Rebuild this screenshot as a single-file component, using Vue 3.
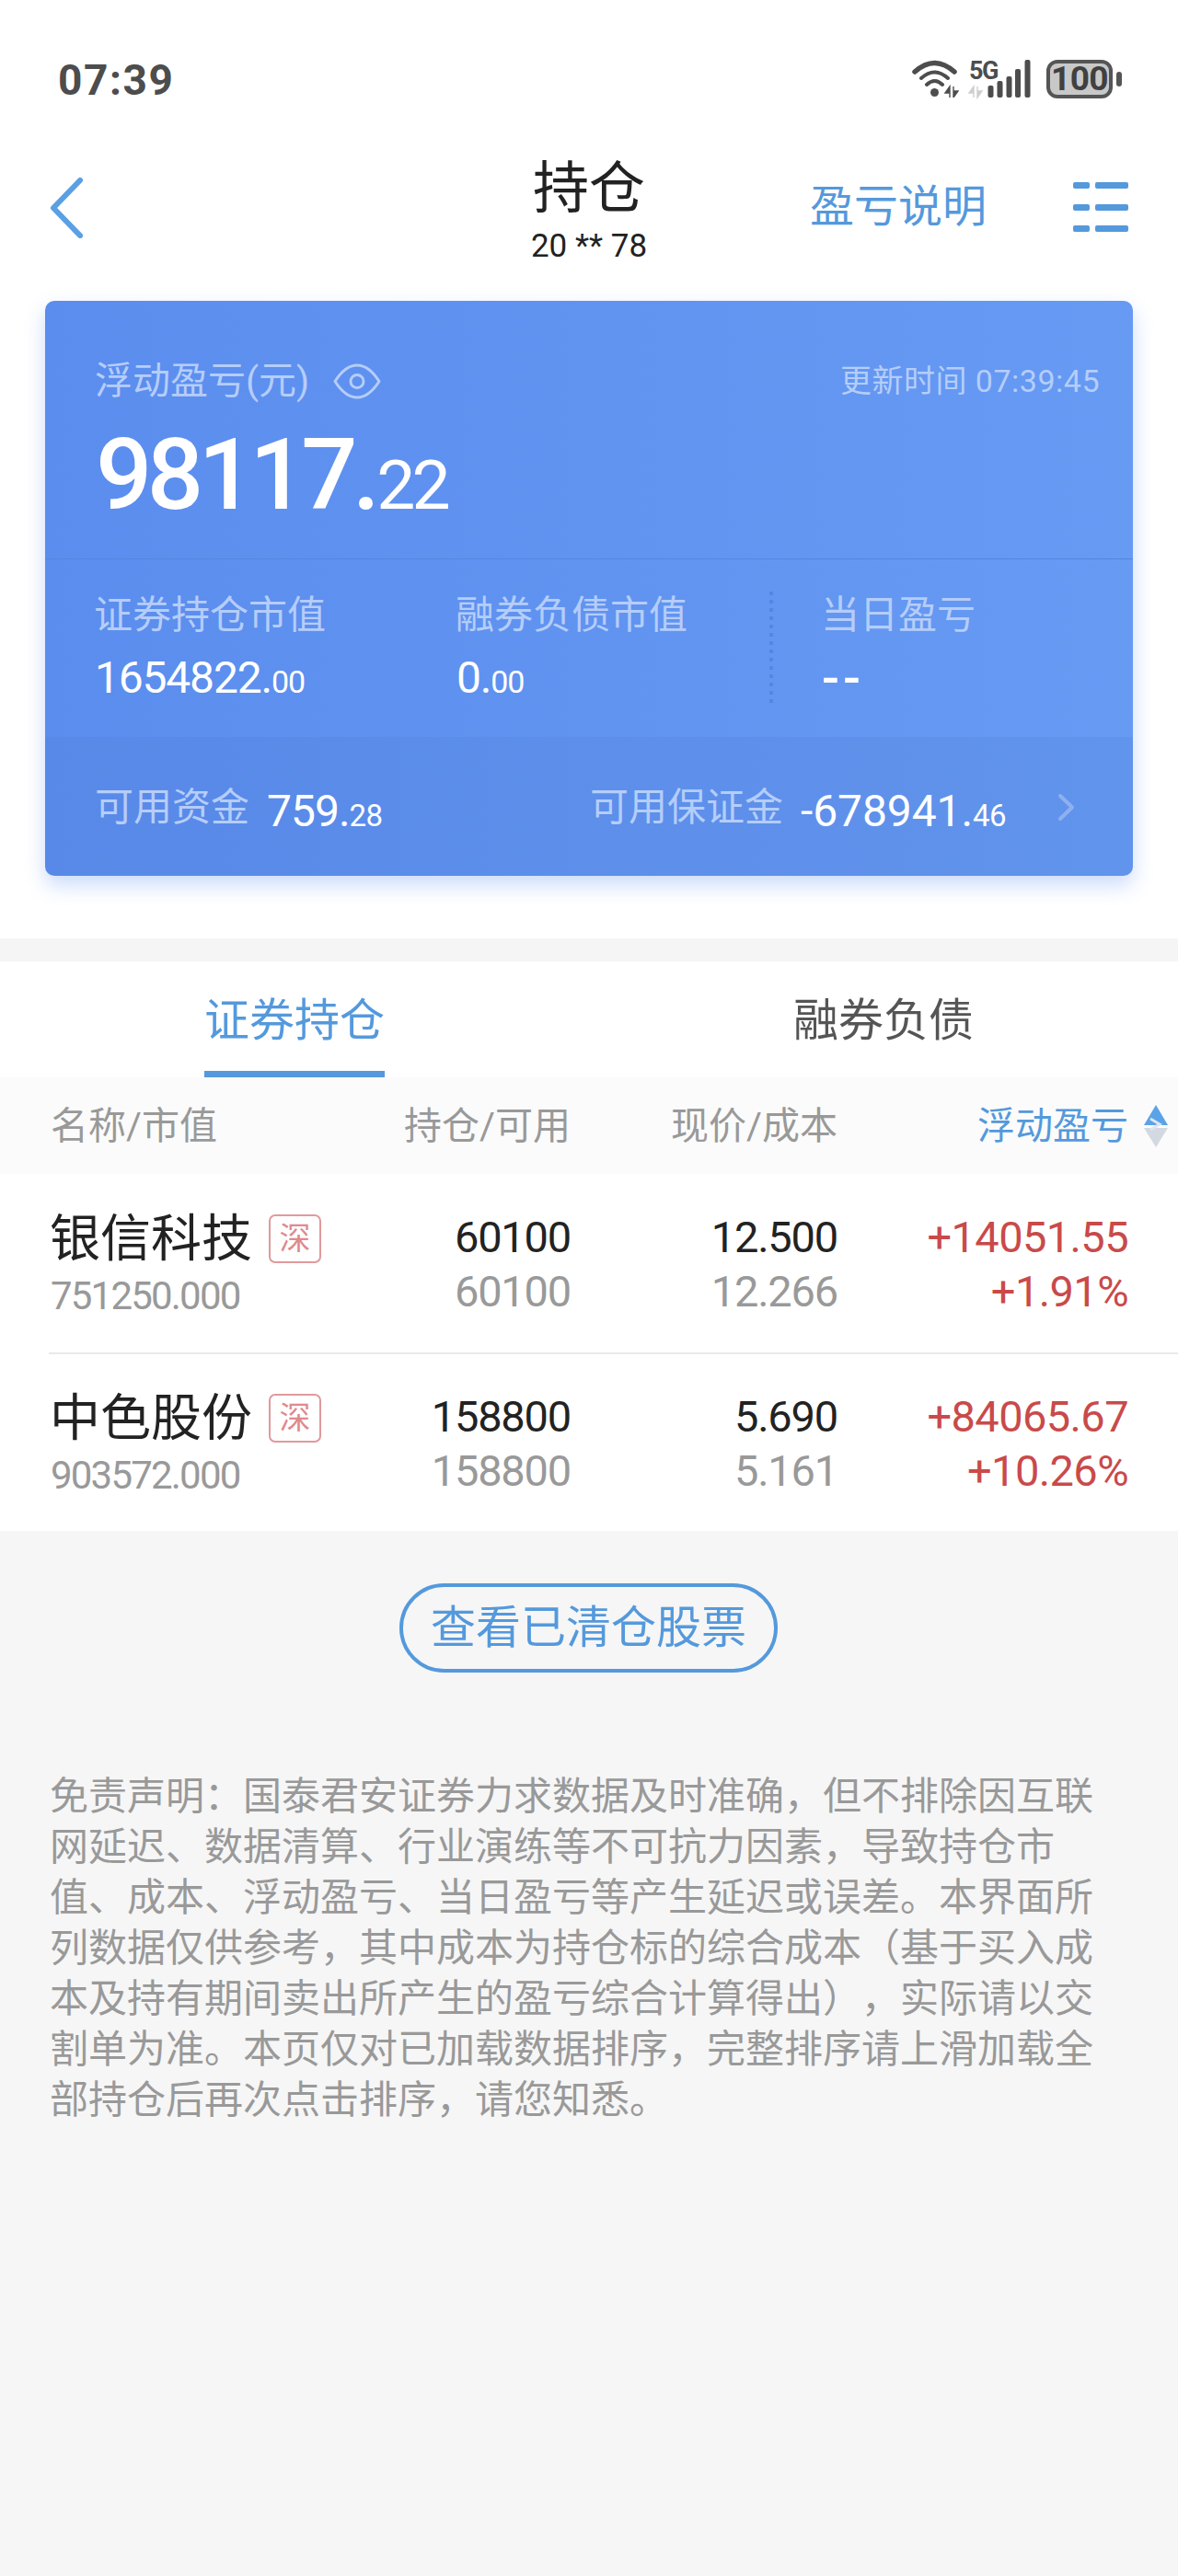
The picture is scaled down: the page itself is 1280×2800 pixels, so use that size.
<script setup>
const rows = [
  { name: '银信科技', mv: '751250.000', qty: '60100', avail: '60100', price: '12.500', cost: '12.266', pl: '+14051.55', pct: '+1.91%' },
  { name: '中色股份', mv: '903572.000', qty: '158800', avail: '158800', price: '5.690', cost: '5.161', pl: '+84065.67', pct: '+10.26%' }
]
const bars = [
  { x: 20.5, y: 28 }, { x: 30.5, y: 23 }, { x: 40.5, y: 18 }, { x: 50, y: 10 }, { x: 60.5, y: 0 }
]
const note = '免责声明\uFF1A国泰君安证券力求数据及时准确\uFF0C但不排除因互联网延迟、数据清算、行业演练等不可抗力因素\uFF0C导致持仓市值、成本、浮动盈亏、当日盈亏等产生延迟或误差。本界面所列数据仅供参考\uFF0C其中成本为持仓标的综合成本\uFF08基于买入成本及持有期间卖出所产生的盈亏综合计算得出\uFF09\uFF0C实际请以交割单为准。本页仅对已加载数据排序\uFF0C完整排序请上滑加载全部持仓后再次点击排序\uFF0C请您知悉。'
</script>

<template>
  <div class="page">
    <div class="status">
      <span class="time">07:39</span>
      <div class="status-icons">
        <svg class="wifi" width="51" height="41" viewBox="0 0 51 41" fill="none" stroke="#4d4d4d" stroke-linecap="round">
          <path d="M3 13 Q24.5 -6 46 13" stroke-width="5.5" />
          <path d="M10 20 Q24.5 7 39 20" stroke-width="4" />
          <path d="M16 27 Q24.5 19 33 27" stroke-width="4" />
          <circle cx="24.5" cy="35.5" r="4.5" fill="#4d4d4d" stroke="none" />
          <path d="M41 41 V29 L36 36 H41 M45 29 V41 L50 34 H45" fill="#4d4d4d" stroke="#4d4d4d" stroke-width="1.4" stroke-linecap="butt" />
        </svg>
        <svg class="signal" width="67" height="41" viewBox="0 0 67 41">
          <text class="fiveg" x="0" y="21">5G</text>
          <path d="M5 41 V29 L0 36 H5 M9 29 V41 L14 34 H9" fill="#cfcfcf" stroke="#cfcfcf" stroke-width="1.4" />
          <rect v-for="b in bars" :key="b.x" :x="b.x" :y="b.y" width="6" :height="41 - b.y" rx="2" fill="#4d4d4d" />
        </svg>
        <div class="battery"><span class="battery-text">100</span></div>
        <span class="battery-cap"></span>
      </div>
    </div>

    <div class="nav">
      <svg class="back" width="36" height="66" viewBox="0 0 36 66" fill="none" stroke="#5aa0e4" stroke-width="6" stroke-linecap="round" stroke-linejoin="round">
        <path d="M33 3 L4 33 L33 63" />
      </svg>
      <div class="title-block">
        <div class="title">持仓</div>
        <div class="account">20 ** 78</div>
      </div>
      <div class="nav-right">
        <span class="explain">盈亏说明</span>
        <div class="menu">
          <div v-for="n in 3" :key="n" class="menu-row"><i></i><b></b></div>
        </div>
      </div>
    </div>

    <div class="card-wrap">
      <div class="card">
        <div class="card-top">
          <div class="top-head">
            <div class="float-label">
              <span>浮动盈亏(元)</span>
              <svg width="52" height="39" viewBox="0 0 52 39" fill="none" stroke="#b5cdf9" stroke-width="3">
                <path d="M2 19.5 C10 7 18 2 26 2 S42 7 50 19.5 C42 32 34 37 26 37 S10 32 2 19.5 Z" stroke-linejoin="round" />
                <circle cx="26" cy="19.5" r="7" />
              </svg>
            </div>
            <span class="update">更新时间 07:39:45</span>
          </div>
          <div class="big-num">98117.<span class="big-dec">22</span></div>
        </div>
        <div class="card-mid">
          <div class="col col-a">
            <div class="card-label">证券持仓市值</div>
            <div class="mid-num">1654822.<span class="mid-dec">00</span></div>
          </div>
          <div class="col col-b">
            <div class="card-label">融券负债市值</div>
            <div class="mid-num">0.<span class="mid-dec">00</span></div>
          </div>
          <div class="dash"></div>
          <div class="col col-c">
            <div class="card-label">当日盈亏</div>
            <div class="mid-num empty-num">--</div>
          </div>
        </div>
        <div class="card-foot">
          <span class="card-label foot-a">可用资金</span>
          <span class="mid-num foot-num-a">759.<span class="foot-dec">28</span></span>
          <span class="card-label foot-b">可用保证金</span>
          <span class="mid-num foot-num-b">-678941.<span class="foot-dec">46</span></span>
          <svg class="foot-chev" width="19" height="31" viewBox="0 0 19 31" fill="none" stroke="#8fb0f0" stroke-width="4" stroke-linecap="round" stroke-linejoin="round">
            <path d="M3 3 L16 15.5 L3 28" />
          </svg>
        </div>
      </div>
    </div>

    <div class="strip"></div>

    <div class="tabs">
      <div class="tab"><span class="tab-on">证券持仓</span></div>
      <div class="tab"><span class="tab-off">融券负债</span></div>
    </div>

    <div class="thead grid">
      <span>名称/市值</span>
      <span class="r">持仓/可用</span>
      <span class="r">现价/成本</span>
      <span class="r sort-cell">
        <em>浮动盈亏</em>
        <svg width="26" height="46" viewBox="0 0 26 46">
          <path d="M13 0 L26 22 H0 Z" fill="#5aa3e8" />
          <path d="M0 25 H26 L13 46 Z" fill="#d3d9e2" />
          <path d="M7 15 L17 21 L7 27" fill="none" stroke="#dfe5ee" stroke-width="3" />
        </svg>
      </span>
    </div>

    <div class="list">
      <div v-for="(row, i) in rows" :key="row.name" class="row-wrap" :class="{ 'has-line': i > 0 }">
        <div class="row grid">
          <div class="name-cell">
            <div class="name-line">
              <span class="name">{{ row.name }}</span>
              <span class="badge">深</span>
            </div>
            <div class="mv">{{ row.mv }}</div>
          </div>
          <div class="r cell"><div class="n1">{{ row.qty }}</div><div class="n2">{{ row.avail }}</div></div>
          <div class="r cell"><div class="n1">{{ row.price }}</div><div class="n2">{{ row.cost }}</div></div>
          <div class="r cell red"><div class="n1">{{ row.pl }}</div><div class="n2">{{ row.pct }}</div></div>
        </div>
      </div>
    </div>

    <div class="bottom">
      <div class="btn">查看已清仓股票</div>
      <p class="note">{{ note }}</p>
    </div>
  </div>
</template>

<style>
body { margin: 0; background: #f6f6f6; }
</style>

<style scoped>
.page {
  width: 1280px;
  height: 2800px;
  background: #f6f6f6;
  font-family: Roboto, "Noto Sans CJK SC", sans-serif;
  text-spacing-trim: space-all;
  overflow: hidden;
}
.status {
  height: 150px;
  box-sizing: border-box;
  padding: 65px 61px 0 63px;
  background: #fff;
  display: flex;
  justify-content: space-between;
  align-items: flex-start;
}
.time {
  font-size: 46px;
  line-height: 44px;
  font-weight: 700;
  color: #4d4d4d;
  letter-spacing: 1.6px;
}
.status-icons { display: flex; align-items: flex-start; }
.wifi { display: block; margin-right: 11px; }
.signal { display: block; margin-right: 17px; overflow: visible; }
.fiveg { font: 700 27px Roboto, sans-serif; fill: #4d4d4d; letter-spacing: -1.5px; }
.battery {
  width: 72px;
  height: 42px;
  box-sizing: border-box;
  border: 4px solid #555;
  border-radius: 12px;
  background: #c8c8c8;
  display: flex;
  align-items: center;
  justify-content: center;
}
.battery-text { font-size: 37px; line-height: 34px; font-weight: 700; color: #404040; letter-spacing: -0.5px; }
.battery-cap { width: 6px; height: 16px; margin: 13px 0 0 4px; border-radius: 3px; background: #555; }

.nav {
  height: 177px;
  box-sizing: border-box;
  background: #fff;
  padding: 0 54px;
  display: grid;
  grid-template-columns: 1fr auto 1fr;
  align-items: start;
}
.back { display: block; margin-top: 43px; }
.title-block { text-align: center; }
.title { font-size: 61px; line-height: 70px; margin-top: 20px; color: #222; font-weight: 400; }
.account { font-size: 35px; line-height: 40px; margin-top: 8px; color: #222; }
.nav-right {
  display: flex;
  justify-content: flex-end;
  align-items: flex-start;
}
.explain { font-size: 48px; line-height: 60px; margin-top: 45px; color: #5499dc; margin-right: 94px; white-space: nowrap; }
.menu { margin-top: 48px; display: flex; flex-direction: column; gap: 16.5px; }
.menu-row { display: flex; gap: 6px; height: 7px; }
.menu-row i { width: 18px; background: #5499dc; border-radius: 2px; }
.menu-row b { width: 36px; background: #5499dc; border-radius: 2px; }

.card-wrap { background: #fff; height: 693px; padding: 0 49px; }
.card {
  width: 1182px;
  height: 625px;
  border-radius: 10px;
  color: #fff;
  background: linear-gradient(90deg, #5b8dee, #669af3);
  box-shadow: 0 10px 22px rgba(94, 143, 238, 0.32);
  overflow: hidden;
  display: flex;
  flex-direction: column;
}
.card-top {
  height: 281px;
  box-sizing: border-box;
  padding: 62px 36px 0 54px;
  border-bottom: 1px solid #5585e0;
}
.top-head { display: flex; justify-content: space-between; align-items: center; height: 50px; }
.float-label { display: flex; align-items: center; gap: 26px; font-size: 41px; line-height: 50px; color: #b5cdf9; }
.float-label svg { display: block; }
.update { font-size: 34px; line-height: 40px; color: #b5cdf9; letter-spacing: 0.5px; }
.big-num { font-size: 108px; line-height: 110px; margin: 22px 0 0 1px; font-weight: 500; letter-spacing: -5.6px; }
.big-dec { font-size: 75px; font-weight: 400; letter-spacing: -4px; margin-left: 2px; }

.card-mid { height: 193px; padding-left: 54px; display: flex; }
.col { padding-top: 36px; }
.col .card-label { margin-left: -1px; }
.col-a { width: 393px; }
.col-b { width: 340px; }
.col-c { margin-left: 53px; }
.dash {
  width: 4px;
  height: 122px;
  margin-top: 35px;
  background: repeating-linear-gradient(180deg, #5585e3 0 4px, transparent 4px 9px);
}
.card-label { font-size: 42px; line-height: 50px; color: #b5cdf9; white-space: nowrap; }
.mid-num { font-size: 48px; line-height: 56px; margin-top: 15px; letter-spacing: -1.2px; white-space: nowrap; font-weight: 400; }
.mid-dec { font-size: 34px; font-weight: 400; letter-spacing: -1px; }
.empty-num { font-size: 56px; font-weight: 500; letter-spacing: 4px; font-variant-ligatures: none; }

.card-foot {
  flex: 1;
  padding: 0 63px 0 54px;
  display: flex;
  align-items: flex-start;
  background: rgba(70, 110, 200, 0.14);
  box-sizing: border-box;
}
.foot-a { width: 187px; margin-top: 52px; }
.foot-num-a { width: 351px; margin-top: 53px; letter-spacing: -1px; }
.foot-b { width: 229px; margin-top: 52px; }
.foot-num-b { flex: 1; margin-top: 53px; letter-spacing: -0.1px; }
.foot-dec { font-size: 33px; font-weight: 400; letter-spacing: -0.6px; }
.foot-chev { display: block; margin-top: 61px; }

.strip { height: 25px; background: #f5f5f5; }

.tabs { height: 126px; background: #fff; display: grid; grid-template-columns: 1fr 1fr; }
.tab { display: flex; justify-content: center; }
.tab-on, .tab-off { font-size: 49px; line-height: 60px; padding-top: 35px; height: 91px; }
.tab-on {
  color: #5499dc;
  width: 196px;
  text-align: center;
  border-bottom: 7px solid #5499dc;
  height: 84px;
  white-space: nowrap;
}
.tab-off { color: #555; }

.grid {
  display: grid;
  grid-template-columns: 325px 240px 290px 315px;
  padding-left: 55px;
}
.r { text-align: right; }
.thead {
  height: 105px;
  align-items: center;
  background: #fbfbfb;
  font-size: 41px;
  line-height: 50px;
  color: #999;
  white-space: nowrap;
}
.sort-cell { display: flex; justify-content: flex-end; align-items: center; gap: 17px; margin-right: -44px; }
.sort-cell em { font-style: normal; color: #5499dc; }
.sort-cell svg { display: block; flex: none; }

.list { background: #fff; }
.row-wrap { height: 194px; box-sizing: border-box; }
.row-wrap.has-line { margin-left: 53px; border-top: 2px solid #e9e9e9; height: 194px; }
.row-wrap.has-line .row { padding-left: 2px; margin-top: -1px; }
.row { height: 192px; }
.name-cell { margin-left: -1px; }
.name-line { display: flex; align-items: center; margin-top: 43px; height: 54px; }
.name { font-size: 55px; line-height: 54px; color: #222; white-space: nowrap; }
.badge {
  margin-left: 18px;
  width: 57px;
  height: 53px;
  box-sizing: border-box;
  border: 2px solid #e09a9c;
  border-radius: 7px;
  color: #e08a8e;
  font-size: 34px;
  line-height: 49px;
  text-align: center;
}
.mv { font-size: 42px; line-height: 48px; margin-top: 12px; margin-left: 1px; color: #999; letter-spacing: -1.8px; }
.cell { padding-top: 42px; }
.n1 { font-size: 47px; line-height: 54px; color: #222; letter-spacing: -1.2px; }
.n2 { font-size: 47px; line-height: 54px; margin-top: 5px; color: #999; letter-spacing: -1.2px; }
.red { margin-right: -1px; }
.red .n1, .red .n2 { color: #c94a4a; letter-spacing: -0.6px; }

.bottom { padding: 57px 92px 0 54px; }
.btn {
  width: 411px;
  height: 97px;
  box-sizing: border-box;
  margin-left: 380px;
  border: 4px solid #5499dc;
  border-radius: 49px;
  color: #5499dc;
  font-size: 49px;
  line-height: 89px;
  text-align: center;
  white-space: nowrap;
}
.note {
  margin: 107px 0 0;
  width: 1134px;
  font-size: 42px;
  line-height: 55px;
  color: #999;
}
</style>
